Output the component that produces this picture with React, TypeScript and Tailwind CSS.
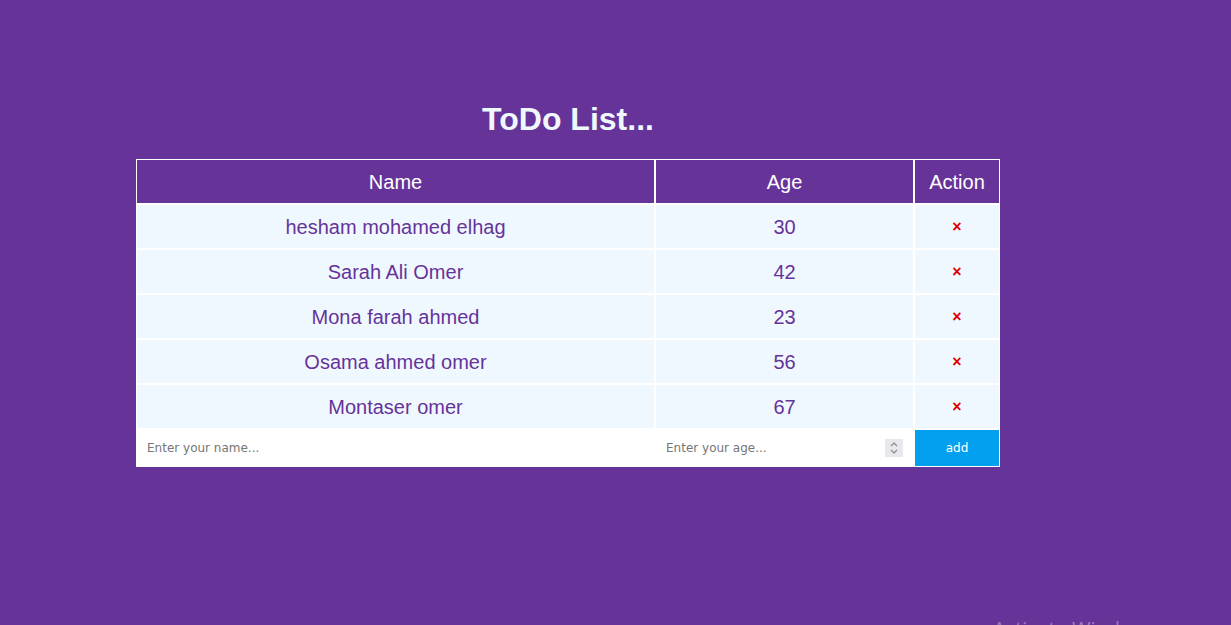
import { useState } from 'react';

type Person = { id: number; name: string; age: number };

const initial: Person[] = [
  { id: 1, name: 'hesham mohamed elhag', age: 30 },
  { id: 2, name: 'Sarah Ali Omer', age: 42 },
  { id: 3, name: 'Mona farah ahmed', age: 23 },
  { id: 4, name: 'Osama ahmed omer', age: 56 },
  { id: 5, name: 'Montaser omer', age: 67 },
];

export default function App() {
  const [people, setPeople] = useState<Person[]>(initial);
  const [name, setName] = useState('');
  const [age, setAge] = useState('');

  const addPerson = () => {
    if (!name || !age) return;
    setPeople([...people, { id: Date.now(), name, age: Number(age) }]);
    setName('');
    setAge('');
  };

  return (
    <div className="relative min-h-screen overflow-hidden bg-[#663399] pt-[101px] font-['Liberation_Sans',Arial,sans-serif]">
      <div className="ml-[136px] w-[864px]">
        <h1 className="mb-[21px] h-[37px] text-center text-[32px] font-bold leading-[37px] text-[#f0f8ff]">
          ToDo List...
        </h1>

        <div className="border border-white bg-white">
          {/* header */}
          <div className="grid grid-cols-[517px_257px_84px] gap-x-[2px]">
            <div className="flex h-[43px] items-center justify-center bg-[#663399] text-[20px] text-white">Name</div>
            <div className="flex h-[43px] items-center justify-center bg-[#663399] text-[20px] text-white">Age</div>
            <div className="flex h-[43px] items-center justify-center bg-[#663399] text-[20px] text-white">Action</div>
          </div>

          {people.map((p) => (
            <div key={p.id} className="mt-[2px] grid grid-cols-[517px_257px_84px] gap-x-[2px]">
              <div className="flex h-[43px] items-center justify-center bg-[#f0f8ff] pt-[1px] text-[20px] text-[#663399]">{p.name}</div>
              <div className="flex h-[43px] items-center justify-center bg-[#f0f8ff] pt-[1px] text-[20px] text-[#663399]">{p.age}</div>
              <div className="flex h-[43px] items-center justify-center bg-[#f0f8ff] pt-[1px]">
                <button
                  onClick={() => setPeople(people.filter((x) => x.id !== p.id))}
                  className="text-[16px] font-bold leading-none text-[#e00000]"
                >
                  ×
                </button>
              </div>
            </div>
          ))}

          {/* input row */}
          <div className="mt-[2px] grid grid-cols-[517px_257px_84px] gap-x-[2px] bg-white">
            <input
              value={name}
              onChange={(e) => setName(e.target.value)}
              placeholder="Enter your name..."
              className="h-[36px] bg-white pl-[10px] font-['DejaVu_Sans',Verdana,sans-serif] text-[12px] text-[#333] placeholder-[#757575] outline-none"
            />
            <div className="relative">
              <input
                type="number"
                value={age}
                onChange={(e) => setAge(e.target.value)}
                placeholder="Enter your age..."
                className="h-[36px] w-full bg-white pl-[10px] pr-[30px] font-['DejaVu_Sans',Verdana,sans-serif] text-[12px] text-[#333] placeholder-[#757575] outline-none"
              />
              {/* spinner */}
              <span className="pointer-events-none absolute left-[229px] top-[9px] flex h-[18px] w-[18px] items-center justify-center bg-[#e8e8ec]">
                <svg width="10" height="14" viewBox="0 0 10 14" fill="none" stroke="#8a8a8a" strokeWidth="1.2">
                  <path d="M2 5 L5 2 L8 5" />
                  <path d="M2 9 L5 12 L8 9" />
                </svg>
              </span>
            </div>
            <button
              onClick={addPerson}
              className="h-[36px] bg-[#03a0f0] font-['DejaVu_Sans',Verdana,sans-serif] text-[12px] text-white"
            >
              add
            </button>
          </div>
        </div>
      </div>

      <div className="pointer-events-none absolute left-[993px] top-[614px] whitespace-nowrap font-['Open_Sans',sans-serif] text-[20px] text-white/35">
        Activate Windows
      </div>
    </div>
  );
}
